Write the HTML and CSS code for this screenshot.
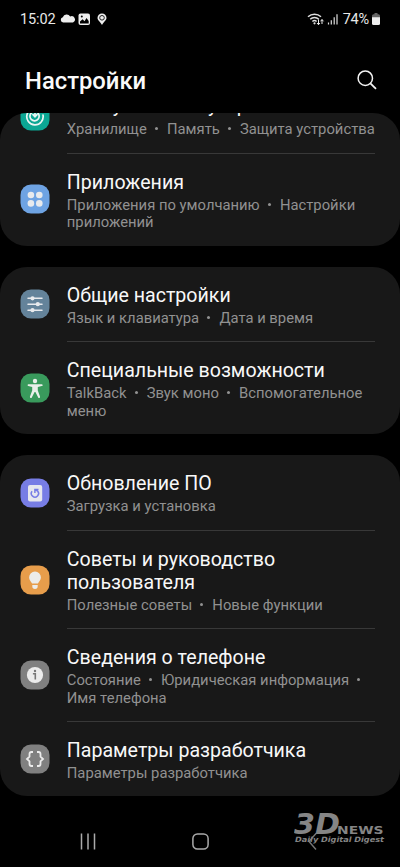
FILE: index.html
```html
<!DOCTYPE html>
<html lang="ru">
<head>
<meta charset="utf-8">
<title>Настройки</title>
<link rel="stylesheet" href="styles.css">
</head>
<body>
<div class="screen">
  <div class="status">
    <span class="clock">15:02</span>
    <svg class="status-left" width="50" height="14" viewBox="0 0 50 14">
      <path fill="#eee" d="M3.2 10.5a2.7 2.7 0 0 1-.4-5.3A4.2 4.2 0 0 1 10.200 4.500 3.200 3.200 0 0 1 13 10.500z"/>
      <rect x="18.500" y="1.500" width="11.500" height="11.500" rx="2" fill="#eee"/>
      <path fill="#000" d="M20 9.500l2.600-2.200 1.900 1.900 2-3.200 2.200 3v2.500H20z"/>
      <circle cx="21.800" cy="4.500" r="1" fill="#000"/>
      <path fill="#eee" d="M42 1.500a4.500 4.500 0 0 0-4.500 4.500c0 2.500 2.500 3.200 4.500 7 2-3.800 4.500-4.500 4.500-7A4.500 4.500 0 0 0 42 1.500z"/>
      <circle cx="42" cy="5.800" r="2.300" fill="none" stroke="#222" stroke-width="1"/>
    </svg>
    <div class="status-right">
      <svg width="32" height="14" viewBox="0 0 32 14" fill="none">
        <g stroke="#ddd" stroke-width="1.500">
          <path d="M1 4.700a9.500 9.500 0 0 1 13 0M3.200 7.200a6.200 6.200 0 0 1 8.600 0M5.400 9.500a3 3 0 0 1 4.200 0"/>
        </g>
        <circle cx="7.500" cy="11.300" r="1.100" fill="#ddd"/>
        <path stroke="#eee" d="M11.500 7.500v5M10 11l1.500 1.700L13 11M15 12V7.500M13.500 9.300L15 7.600l1.500 1.700"/>
        <path stroke="#ddd" stroke-width="1.200" d="M21.500 12.500v-2M24.300 12.500V8.200M27.200 12.500V5.200M30 12.500V2.200"/>
      </svg>
      <span class="percent">74%</span>
      <svg width="8" height="12" viewBox="0 0 8 12">
        <path fill="#666" d="M2.500 0h3v1.300H6.500A1.500 1.500 0 0 1 8 2.800V5H0V2.800A1.500 1.500 0 0 1 1.500 1.300h1z"/>
        <path fill="#eee" d="M0 4.300h8v6.200A1.500 1.500 0 0 1 6.500 12h-5A1.500 1.500 0 0 1 0 10.500z"/>
      </svg>
    </div>
  </div>

  <header class="header">
    <h1>Настройки</h1>
    <svg width="20" height="20" viewBox="0 0 20 20" fill="none" stroke="#f4f4f4" stroke-width="1.500">
      <circle cx="8.300" cy="8.200" r="7.200"/><path stroke-width="1.800" d="M13.400 13.400L19 18.800"/>
    </svg>
  </header>

  <main>
    <section class="card card-cut">
      <div class="row row-cut">
        <svg class="icon" viewBox="0 0 30 30"><rect x=".5" y=".5" width="29" height="29" rx="10.500" fill="#0ba794"/>
          <g fill="none" stroke="#e8f5f3" stroke-width="1.700" stroke-linecap="round"><path d="M23 14a8.200 8.200 0 1 1-4-5.500"/><path d="M11.800 11.500a4.600 4.600 0 1 0 5-.3"/><path d="M15 11v4.500M13 13.700l2 2 2-2"/></g></svg>
        <div class="text"><div class="title">Обслуживание устройства</div><div class="sub">Хранилище<i></i>Память<i></i>Защита устройства</div></div>
      </div>
      <div class="row">
        <svg class="icon" viewBox="0 0 30 30"><rect x=".5" y=".5" width="29" height="29" rx="10.500" fill="#6ea3e3"/>
          <g fill="#e8eaed"><circle cx="10.900" cy="11" r="3.300"/><circle cx="19.300" cy="11" r="3.300"/><circle cx="10.900" cy="19.400" r="3.300"/><circle cx="19.300" cy="19.400" r="3.300"/></g></svg>
        <div class="text"><div class="title">Приложения</div><div class="sub">Приложения по умолчанию<i></i>Настройки<br>приложений</div></div>
      </div>
    </section>

    <section class="card">
      <div class="row">
        <svg class="icon" viewBox="0 0 30 30"><rect x=".5" y=".5" width="29" height="29" rx="10.500" fill="#64839a"/>
          <g stroke="#e8eaed" stroke-width="1.500" stroke-linecap="round"><path d="M8 9.300h14M8 15.200h14M8 21.200h14"/></g>
          <g fill="#e8eaed"><circle cx="12.500" cy="9.300" r="2.100"/><circle cx="17.800" cy="15.200" r="2.100"/><circle cx="12.500" cy="21.200" r="2.100"/></g></svg>
        <div class="text"><div class="title">Общие настройки</div><div class="sub">Язык и клавиатура<i></i>Дата и время</div></div>
      </div>
      <div class="row">
        <svg class="icon" viewBox="0 0 30 30"><rect x=".5" y=".5" width="29" height="29" rx="10.500" fill="#399a5c"/>
          <circle cx="15" cy="8" r="2.200" fill="#e9efe9"/><path fill="#e9efe9" d="M8.300 11.200h13.400a.9.900 0 0 1 0 1.900L17.800 14v3.500l2.300 6.300a1 1 0 0 1-1.900.6L15.400 19h-.8l-2.800 5.400a1 1 0 0 1-1.900-.6l2.300-6.300V14l-3.900-.9a1 1 0 0 1 0-1.900z"/></svg>
        <div class="text"><div class="title">Специальные возможности</div><div class="sub">TalkBack<i></i>Звук моно<i></i>Вспомогательное<br>меню</div></div>
      </div>
    </section>

    <section class="card">
      <div class="row">
        <svg class="icon" viewBox="0 0 30 30"><rect x=".5" y=".5" width="29" height="29" rx="10.500" fill="#777de5"/>
          <rect x="8" y="7" width="14.200" height="16.500" rx="2" fill="#e6e7ee"/>
          <path fill="none" stroke="#777de5" stroke-width="1.500" d="M12.100 13.200a3.600 3.600 0 1 0 5.500-.2L15 11.700M14.900 15v-3.600h3.600"/></svg>
        <div class="text"><div class="title">Обновление ПО</div><div class="sub">Загрузка и установка</div></div>
      </div>
      <div class="row">
        <svg class="icon" viewBox="0 0 30 30"><rect x=".5" y=".5" width="29" height="29" rx="10.500" fill="#e79d4b"/>
          <path fill="#ececea" d="M15 6.500a5.900 5.900 0 0 0-5.900 5.900c0 2.800 2.100 3.900 3 6.200h5.800c.9-2.300 3-3.400 3-6.200A5.900 5.900 0 0 0 15 6.500zM12.300 20h5.400v1.200a2.700 2.700 0 0 1-5.400 0z"/></svg>
        <div class="text"><div class="title">Советы и руководство<br>пользователя</div><div class="sub">Полезные советы<i></i>Новые функции</div></div>
      </div>
      <div class="row">
        <svg class="icon" viewBox="0 0 30 30"><rect x=".5" y=".5" width="29" height="29" rx="10.500" fill="#808080"/>
          <circle cx="15" cy="15" r="8.100" fill="#ececec"/><circle cx="15" cy="11" r="1.200" fill="#777"/><path fill="none" stroke="#777" stroke-width="1.600" d="M12.900 13.800h2.400v5.700"/></svg>
        <div class="text"><div class="title">Сведения о телефоне</div><div class="sub">Состояние<i></i>Юридическая информация<i></i><br>Имя телефона</div></div>
      </div>
      <div class="row">
        <svg class="icon" viewBox="0 0 30 30"><rect x=".5" y=".5" width="29" height="29" rx="10.500" fill="#808080"/>
          <path fill="none" stroke="#ececec" stroke-width="1.800" d="M13 8h-1.500a2 2 0 0 0-2 2v2.700L7 15l2.500 2.300V20a2 2 0 0 0 2 2H13M17 8h1.500a2 2 0 0 1 2 2v2.700L23 15l-2.500 2.300V20a2 2 0 0 1-2 2H17"/></svg>
        <div class="text"><div class="title">Параметры разработчика</div><div class="sub">Параметры разработчика</div></div>
      </div>
    </section>
  </main>

  <nav class="nav">
    <svg width="16" height="17" viewBox="0 0 16 17" stroke="#aaa" stroke-width="1.500"><path d="M1.500 .5v16M8 .5v16M14.500 .5v16"/></svg>
    <svg class="home" width="17" height="17" viewBox="0 0 17 17"><rect x=".9" y=".9" width="15.200" height="15.200" rx="4.500" fill="none" stroke="#aaa" stroke-width="1.500"/></svg>
    <svg class="back" width="9" height="17" viewBox="0 0 9 17" fill="none" stroke="#777" stroke-width="1.400"><path d="M8 .5L1 8.500l7 8"/></svg>
  </nav>
  <svg class="watermark" width="92" height="40" viewBox="0 -6 92 40" fill="#858585">
    <text class="mark-big" x="0" y="22" textLength="46" lengthAdjust="spacingAndGlyphs">3D</text>
    <text class="mark-news" x="43" y="22" textLength="46.500" lengthAdjust="spacingAndGlyphs">NEWS</text>
    <text class="mark-tag" x="1" y="30" textLength="89" lengthAdjust="spacingAndGlyphs">Daily Digital Digest</text>
  </svg>
</div>
</body>
</html>
```
FILE: styles.css
```css
* { box-sizing: border-box; }
body { margin: 0; background: #000; font-family: Roboto, "Noto Sans", sans-serif; }
.screen { position: relative; width: 400px; height: 867px; overflow: hidden; background: #000; display: flex; flex-direction: column; }
.status { height: 37px; padding: 1px 20px 0; display: flex; align-items: center; color: #e8e8e8; font-size: 14.500px; }
.clock { width: 36px; letter-spacing: -.1px; }
.status-left { margin-left: 4px; }
.status-right { margin-left: auto; display: flex; align-items: center; }
.percent { margin: 0 3px 0 4px; letter-spacing: -.2px; }
.header { height: 76px; padding: 10px 23px 0 25px; display: flex; align-items: flex-start; justify-content: space-between; }
.header svg { margin-top: 23px; }
h1 { margin: 20px 0 0; font-size: 23.800px; line-height: 28px; font-weight: 500; color: #fafafa; }
main { display: flex; flex-direction: column; gap: 21px; }
.card { background: #181818; border-radius: 27px; overflow: hidden; }
.card-cut { height: 132.500px; }
.row { display: flex; align-items: center; padding-left: 20.400px; padding-right: 25px; }
.row-cut { margin-top: -35.200px; }
.row-cut .title { margin: -1.300px 0 4.300px; }
.icon { width: 30px; height: 30px; flex: none; margin-right: 16.400px; }
.text { flex: 1; min-width: 0; padding: 17px 0 13.700px; border-bottom: 1px solid #383838; white-space: nowrap; }
.row:first-child .text { padding-top: 17.600px; }
.row:last-child .text { border-bottom: 0; padding-bottom: 13.300px; }
.title { font-size: 19.600px; line-height: 23px; margin-bottom: 3px; color: #f8f8f8; }
.sub { font-size: 14.800px; line-height: 17.600px; color: #919191; }
.sub i { display: inline-block; width: 3px; height: 3px; margin: 0 9px 4px 8.200px; border-radius: 50%; background: #919191; }
.nav { margin-top: 37.300px; height: 17px; padding-left: 80px; display: flex; }
.home { margin-left: 95.500px; }
.back { margin-left: 99px; }
.watermark { position: absolute; left: 294px; top: 806px; }
.mark-big { font: italic bold 28px "DejaVu Sans", sans-serif; }
.mark-news { font: bold 11px "DejaVu Sans", sans-serif; }
.mark-tag { font: italic bold 7.300px "DejaVu Sans", sans-serif; }
```
